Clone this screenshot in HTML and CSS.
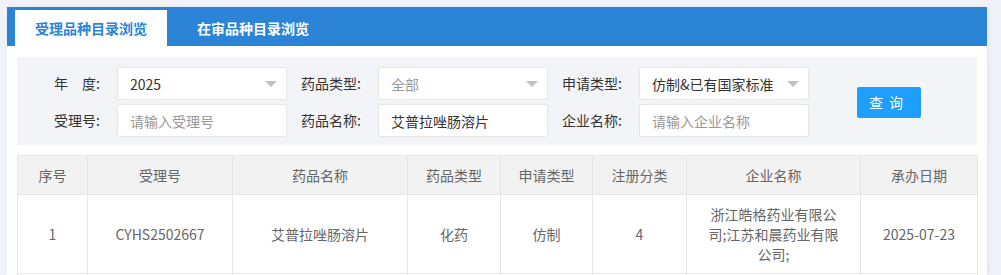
FILE: index.html
```html
<!DOCTYPE html>
<html lang="zh-CN">
<head>
  <meta charset="UTF-8">
  <title>受理品种目录浏览</title>
  <link rel="stylesheet" href="styles.css">
</head>
<body>
  <div class="panel">
    <!-- 标签页 -->
    <div class="tabs">
      <div class="tab activo">受理品种目录浏览</div>
      <div class="tab">在审品种目录浏览</div>
    </div>

    <div class="contenido">
      <!-- 查询条件 -->
      <div class="buscador">
        <div class="campos">
          <label class="etiqueta">年　度:</label>
          <div class="caja select"><span>2025</span><i class="flecha"></i></div>
          <label class="etiqueta">药品类型:</label>
          <div class="caja select"><span class="gris">全部</span><i class="flecha"></i></div>
          <label class="etiqueta">申请类型:</label>
          <div class="caja select"><span>仿制&amp;已有国家标准</span><i class="flecha"></i></div>

          <label class="etiqueta">受理号:</label>
          <input class="caja" type="text" placeholder="请输入受理号">
          <label class="etiqueta">药品名称:</label>
          <input class="caja" type="text" value="艾普拉唑肠溶片">
          <label class="etiqueta">企业名称:</label>
          <input class="caja" type="text" placeholder="请输入企业名称">
        </div>
        <button class="boton">查询</button>
      </div>

      <!-- 结果表格 -->
      <table class="tabla">
        <colgroup>
          <col style="width:70px">
          <col style="width:145px">
          <col style="width:175px">
          <col style="width:93px">
          <col style="width:92px">
          <col style="width:94px">
          <col style="width:174px">
          <col style="width:117px">
        </colgroup>
        <thead>
          <tr>
            <th>序号</th>
            <th>受理号</th>
            <th>药品名称</th>
            <th>药品类型</th>
            <th>申请类型</th>
            <th>注册分类</th>
            <th>企业名称</th>
            <th>承办日期</th>
          </tr>
        </thead>
        <tbody>
          <tr>
            <td>1</td>
            <td>CYHS2502667</td>
            <td>艾普拉唑肠溶片</td>
            <td>化药</td>
            <td>仿制</td>
            <td>4</td>
            <td class="empresa">浙江皓格药业有限公司;江苏和晨药业有限公司;</td>
            <td>2025-07-23</td>
          </tr>
          <tr>
            <td></td><td></td><td></td><td></td><td></td><td></td><td></td><td></td>
          </tr>
        </tbody>
      </table>
    </div>
  </div>
</body>
</html>
```

FILE: styles.css
```css
html, body {
  height: 100%;
}

body {
  margin: 0;
  padding: 7px 14px 0 7px;
  box-sizing: border-box;
  background-color: #f0f3f7;
  font-family: "Noto Sans CJK SC", "Microsoft YaHei", sans-serif;
  font-size: 14px;
  color: #333;
  overflow: hidden;
}

.panel {
  background-color: white;
  box-shadow: 2px 0 6px rgba(0, 0, 0, 0.06);
  height: 100%;
  overflow: hidden;
}

.tabs {
  display: flex;
  height: 39px;
  padding: 3px 0 0 8px;
  box-sizing: border-box;
  background-color: #2b84d6;
}

.tab {
  width: 152px;
  margin-right: 10px;
  text-align: center;
  line-height: 36px;
  color: white;
  font-weight: bold;
}

.tab.activo {
  background-color: white;
  color: #2b84d6;
}

.contenido {
  padding: 11px 10px 0 10px;
}

.buscador {
  display: flex;
  align-items: center;
  background-color: #f3f4f8;
  padding: 10px 0 8px 0;
}

.campos {
  display: grid;
  grid-template-columns: 100px 170px 91px 170px 91px 170px;
  row-gap: 4px;
}

.etiqueta {
  text-align: right;
  padding-right: 17px;
  line-height: 33px;
  color: #333;
}

.caja {
  height: 33px;
  box-sizing: border-box;
  border: 1px solid #e6e6e6;
  border-radius: 2px;
  background-color: white;
  padding: 0 12px;
  font-family: inherit;
  font-size: 14px;
  color: #333;
  outline: none;
}

.caja::placeholder {
  color: #999;
}

.select {
  display: flex;
  align-items: center;
  justify-content: space-between;
}

.gris {
  color: #999;
}

.flecha {
  width: 0;
  height: 0;
  border-left: 6px solid transparent;
  border-right: 6px solid transparent;
  border-top: 6px solid #c2c2c2;
  margin-right: -3px;
}

.boton {
  margin-left: 48px;
  width: 64px;
  height: 31px;
  border: none;
  border-radius: 2px;
  background-color: #1e9fff;
  color: white;
  font-family: inherit;
  font-size: 14px;
  letter-spacing: 6px;
  padding-left: 6px;
}

.tabla {
  margin-top: 10px;
  width: 960px;
  table-layout: fixed;
  border-collapse: collapse;
  color: #666;
}

.tabla th, .tabla td {
  border: 1px solid #e6e6e6;
  padding: 9px 15px;
  line-height: 20px;
  text-align: center;
  font-weight: normal;
}

.tabla th {
  background-color: #f2f2f2;
}

.tabla td.empresa {
  padding: 9px 20px;
}
```
